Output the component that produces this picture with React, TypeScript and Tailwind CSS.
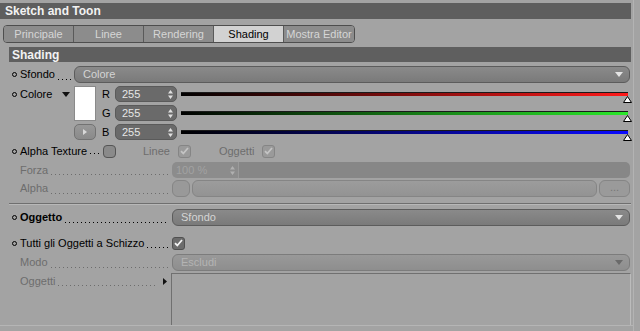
import React from 'react'

function Dot() {
  return <span className="w-[5px] h-[5px] rounded-full border border-black shrink-0 mr-[3px]" />
}

function Leader({ disabled = false }: { disabled?: boolean }) {
  return (
    <span
      className={`flex-1 self-end mb-[3px] mx-[3px] h-px bg-repeat-x bg-[length:4px_1px] ${
        disabled
          ? 'bg-[linear-gradient(to_right,#6d6d6d_1px,transparent_1px)]'
          : 'bg-[linear-gradient(to_right,#000_1px,transparent_1px)]'
      }`}
    />
  )
}

function Label({ text, w, dot = true, disabled = false, bold = false }: { text: string; w: string; dot?: boolean; disabled?: boolean; bold?: boolean }) {
  return (
    <div className={`flex items-center h-full shrink-0 whitespace-nowrap pl-[3px] ${w}`}>
      {dot ? <Dot /> : <span className="w-[8px] shrink-0" />}
      <span className={`${disabled ? 'text-[#6d6d6d]' : 'text-black'} ${bold ? 'font-bold' : ''}`}>{text}</span>
      <Leader disabled={disabled} />
    </div>
  )
}

function Arrow({ color = '#e8e8e8' }: { color?: string }) {
  return (
    <svg width="8" height="5" viewBox="0 0 8 5" className="shrink-0">
      <path d="M0 0h8L4 5z" fill={color} />
    </svg>
  )
}

function Dropdown({ value, disabled = false }: { value: string; disabled?: boolean }) {
  return (
    <div
      className={`flex-1 h-full flex items-center justify-between rounded-[6px] border pl-[8px] pr-[6px] ${
        disabled
          ? 'border-[#7c7c7c] bg-gradient-to-b from-[#999] to-[#8e8e8e] text-[#b4b4b4]'
          : 'border-[#5c5c5c] bg-gradient-to-b from-[#8a8a8a] to-[#7a7a7a] text-[#d4d4d4]'
      }`}
    >
      <span>{value}</span>
      <Arrow color={disabled ? '#6a6a6a' : '#e4e4e4'} />
    </div>
  )
}

function Spin({ color = '#e0e0e0' }: { color?: string }) {
  return (
    <svg width="5" height="9" viewBox="0 0 5 9" className="shrink-0">
      <path d="M0 3.5L2.5 0L5 3.5zM0 5.5L2.5 9L5 5.5z" fill={color} />
    </svg>
  )
}

function Check({ disabled = false }: { disabled?: boolean }) {
  return (
    <div
      className={`w-[13px] h-[13px] rounded-[3px] border flex items-center justify-center ${
        disabled ? 'bg-[#9a9a9a] border-[#858585]' : 'bg-[#6c6c6c] border-[#505050]'
      }`}
    >
      <svg width="9" height="8" viewBox="0 0 9 8">
        <path d="M1 4.2L3.3 6.5L8 1" stroke={disabled ? '#c4c4c4' : '#f4f4f4'} strokeWidth="1.8" fill="none" />
      </svg>
    </div>
  )
}

function ColorRow({ letter, to }: { letter: string; to: string }) {
  return (
    <div className="flex items-center h-[16px]">
      <span className="w-[14px] pl-[1px] text-black">{letter}</span>
      <div className="w-[62px] h-full flex items-center justify-between rounded-[5px] bg-[#6a6a6a] border border-[#5a5a5a] pl-[6px] pr-[3px] text-[#e6e6e6]">
        <span>255</span>
        <Spin />
      </div>
      <div className="relative flex-1 ml-[4px] mr-[3px] h-full flex items-center">
        <div className="w-full h-[4px] border-t border-[#1a1a1a]" style={{ background: `linear-gradient(to right, #000, ${to})` }} />
        <svg width="9" height="7" viewBox="0 0 9 7" className="absolute right-[-4px] top-[10px]">
          <path d="M4.5 0.5L8.5 6.5H0.5z" fill="#fff" stroke="#000" strokeWidth="1" />
        </svg>
      </div>
    </div>
  )
}

export default function App() {
  return (
    <div className="relative w-[640px] h-[331px] overflow-hidden bg-[#a3a3a3] text-[11px] leading-none" style={{ fontFamily: '"Liberation Sans", Arial, sans-serif' }}>
      <div className="absolute right-[6px] top-0 bottom-0 w-px bg-[#b3b3b3]" />
      <div className="pt-[3px]">
        <div className="h-[16px] w-[631px] bg-[#5e5e5e] text-[#f2f2f2] font-bold text-[12px] flex items-center pl-[5px]">Sketch and Toon</div>

        <div className="mt-[6px] ml-[3px] flex h-[18px] w-[352px] rounded-[4px] border border-[#4e4e4e] overflow-hidden">
          {['Principale', 'Linee', 'Rendering', 'Shading', 'Mostra Editor'].map((t, i) => (
            <div
              key={t}
              className={`w-[70px] flex items-center justify-center ${i < 4 ? 'border-r border-[#5a5a5a]' : ''} ${
                t === 'Shading' ? 'bg-[#d2d2d2] text-black' : 'bg-[#8c8c8c] text-[#d6d6d6]'
              }`}
            >
              {t}
            </div>
          ))}
        </div>

        <div className="ml-[9px] w-[622px]">
          <div className="mt-[4px] h-[15px] bg-[#5f5f5f] text-[#f2f2f2] font-bold text-[12px] flex items-center pl-[3px]">Shading</div>

          <div className="mt-[4px] h-[17px] flex items-center pr-[1px]">
            <Label text="Sfondo" w="w-[65px]" />
            <Dropdown value="Colore" />
          </div>

          <div className="mt-[3px] flex">
            <div className="w-[65px] h-[16px] flex items-center justify-between pr-[4px] shrink-0">
              <div className="flex items-center pl-[3px]">
                <Dot />
                <span className="text-black">Colore</span>
              </div>
              <Arrow color="#111" />
            </div>
            <div className="w-[22px] flex flex-col shrink-0">
              <div className="h-[35px] bg-white border border-[#8a8a8a]" />
              <div className="mt-[3px] h-[16px] rounded-[5px] bg-gradient-to-b from-[#989898] to-[#8a8a8a] border border-[#727272] flex items-center justify-center">
                <svg width="4" height="6" viewBox="0 0 4 6">
                  <path d="M0 0L4 3L0 6z" fill="#d8d8d8" />
                </svg>
              </div>
            </div>
            <div className="flex-1 flex flex-col gap-[3px] pl-[5px]">
              <ColorRow letter="R" to="#ff1a1a" />
              <ColorRow letter="G" to="#2ae82a" />
              <ColorRow letter="B" to="#0a0aff" />
            </div>
          </div>

          <div className="mt-[3px] h-[16px] flex items-center">
            <div className="flex items-center pl-[3px] w-[94px] whitespace-nowrap">
              <Dot />
              <span className="text-black">Alpha Texture</span>
              <Leader />
            </div>
            <div className="w-[13px] h-[13px] rounded-[4px] bg-[#8a8a8a] border border-[#555]" />
            <span className="ml-[27px] text-[#6d6d6d]">Linee</span>
            <div className="ml-[8px]"><Check disabled /></div>
            <span className="ml-[28px] text-[#6d6d6d]">Oggetti</span>
            <div className="ml-[8px]"><Check disabled /></div>
          </div>

          <div className="mt-[3px] h-[16px] flex items-center pr-[1px]">
            <Label text="Forza" w="w-[163px]" dot={false} disabled />
            <div className="w-[66px] h-full flex items-center justify-between rounded-l-[5px] bg-[#8c8c8c] pl-[4px] pr-[3px] text-[#a2a2a2]">
              <span>100 %</span>
              <Spin color="#b0b0b0" />
            </div>
            <div className="flex-1 h-full rounded-r-[5px] bg-[#878787] border-l border-[#9a9a9a]" />
          </div>

          <div className="mt-[2px] h-[17px] flex items-center pr-[1px]">
            <Label text="Alpha" w="w-[163px]" dot={false} disabled />
            <div className="w-[18px] h-full rounded-[6px] bg-[#999] border border-[#858585]" />
            <div className="flex-1 ml-[2px] h-full rounded-[6px] bg-gradient-to-b from-[#9c9c9c] to-[#939393] border border-[#858585]" />
            <div className="w-[31px] ml-[2px] h-full rounded-[6px] bg-[#9a9a9a] border border-[#858585] flex items-end justify-center pb-[3px] text-[#777]">...</div>
          </div>

          <div className="mt-[6px] h-px bg-[#6f6f6f]" />
          <div className="h-px bg-[#b8b8b8]" />

          <div className="mt-[4px] h-[17px] flex items-center pr-[1px]">
            <Label text="Oggetto" w="w-[163px]" bold />
            <Dropdown value="Sfondo" />
          </div>

          <div className="mt-[9px] h-[16px] flex items-center">
            <Label text="Tutti gli Oggetti a Schizzo" w="w-[163px]" />
            <Check />
          </div>

          <div className="mt-[3px] h-[17px] flex items-center pr-[1px]">
            <Label text="Modo" w="w-[163px]" dot={false} disabled />
            <Dropdown value="Escludi" disabled />
          </div>

          <div className="mt-[2px] flex">
            <div className="w-[162px] h-[16px] flex items-center justify-between shrink-0 pr-[4px]">
              <Label text="Oggetti" w="w-[150px]" dot={false} disabled />
              <svg width="4" height="7" viewBox="0 0 4 7">
                <path d="M0 0L4 3.5L0 7z" fill="#111" />
              </svg>
            </div>
            <div className="flex-1 h-[52px] border-t border-l border-[#707070] border-r border-r-[#bcbcbc] bg-[#a3a3a3]" />
          </div>
        </div>
        <div className="h-px bg-[#b5b5b5] w-[634px]" />
      </div>
    </div>
  )
}
